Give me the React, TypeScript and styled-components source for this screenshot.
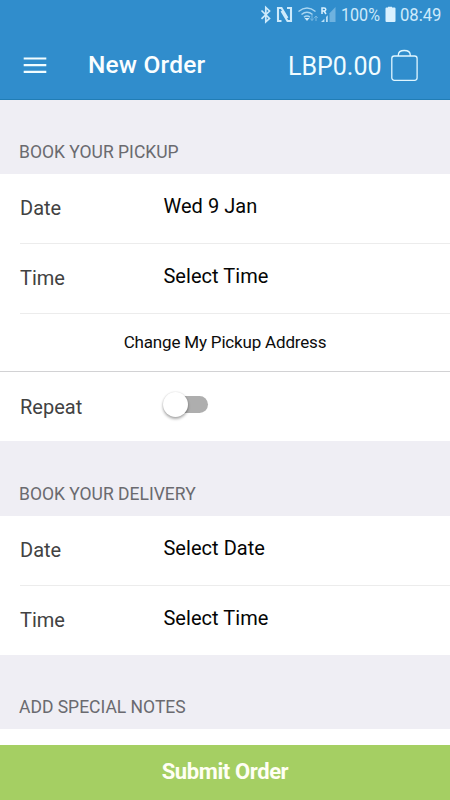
import React from "react";
import styled, { createGlobalStyle } from "styled-components";

const GlobalStyle = createGlobalStyle`
  * { box-sizing: border-box; }
  body { margin: 0; background: #efeef4; font-family: Roboto, "Liberation Sans", sans-serif; }
`;

const Screen = styled.div`
  display: flex;
  flex-direction: column;
  width: 100%;
  height: 800px;
  overflow: hidden;
  background: #efeef4;
`;

const Header = styled.header`
  flex: none;
  height: 100px;
  background: #308dcc;
  color: #fff;
  border-bottom: 1px solid #217db5;
`;

const StatusBar = styled.div`
  display: flex;
  justify-content: flex-end;
  height: 32px;
  padding-right: 9px;
  color: #cdeafb;
`;

const StatusText = styled.span<{ $width: number; $scale: number }>`
  width: ${(p) => p.$width}px;
  font-size: 18.5px;
  line-height: 31px;
  white-space: nowrap;
  transform: scaleX(${(p) => p.$scale});
  transform-origin: left center;
`;

const StatusIcons = styled.svg`
  display: block;
  width: 83px;
  height: 32px;
`;

const Battery = styled.svg`
  display: block;
  width: 15px;
  height: 32px;
`;

const TitleBar = styled.div`
  display: flex;
  align-items: flex-start;
  height: 67px;
  padding: 0 32px 0 23px;
`;

const MenuButton = styled.button`
  width: 65px;
  height: 67px;
  padding: 0;
  border: 0;
  background: none;
  color: inherit;
  svg { display: block; }
`;

const Title = styled.h1`
  flex: 1;
  margin: 0;
  font-size: 24.5px;
  font-weight: 500;
  line-height: 66px;
  letter-spacing: 0.18px;
  color: #fafeff;
`;

const Amount = styled.span`
  width: 103px;
  font-size: 25px;
  line-height: 69px;
  white-space: nowrap;
  color: #f0fcff;
`;

const Bag = styled.svg`
  display: block;
  width: 27px;
  height: 67px;
`;

const Content = styled.main`
  flex: 1;
  min-height: 0;
  overflow: hidden;
`;

const SectionTitle = styled.h2<{ $height?: number }>`
  display: flex;
  align-items: flex-end;
  height: ${(p) => p.$height ?? 74}px;
  margin: 0;
  padding: 0 19px 12px;
  font-size: 17.5px;
  font-weight: 400;
  line-height: 20px;
  color: #6a6a6f;
`;

const List = styled.div`
  background: #fff;
`;

const Row = styled.div<{ $divider?: boolean; $height?: number }>`
  display: grid;
  grid-template-columns: 143.4px 1fr;
  height: ${(p) => p.$height ?? 70}px;
  margin-left: 20px;
  border-bottom: ${(p) => (p.$divider ? "1px solid #ececec" : "0")};
`;

const Label = styled.span<{ $top?: number }>`
  padding-top: ${(p) => p.$top ?? 22}px;
  font-size: 20px;
  line-height: 24px;
  color: #424242;
`;

const Value = styled.span`
  padding-top: 20px;
  font-size: 20px;
  line-height: 24px;
  letter-spacing: 0.05px;
  color: #050505;
`;

const AddressButton = styled.button`
  display: block;
  width: 100%;
  height: 58px;
  padding: 0 0 1px;
  border: 0;
  border-bottom: 1px solid #d2d2d4;
  background: #fff;
  font: 400 17px/22px Roboto, sans-serif;
  letter-spacing: -0.18px;
  color: #0c0c0c;
`;

const Track = styled.span`
  display: block;
  width: 42px;
  height: 17px;
  margin: 24px 0 0 3px;
  border-radius: 9px;
  background: #aeaeae;
`;

const Thumb = styled.span`
  display: block;
  width: 25px;
  height: 25px;
  border-radius: 50%;
  background: #fff;
  box-shadow: 0 2px 3px rgba(0, 0, 0, 0.32), 0 0 2px rgba(0, 0, 0, 0.15);
  transform: translate(-3px, -4px);
`;

const NotesField = styled.div`
  height: 16px;
  background: #fff;
`;

const SubmitButton = styled.button`
  flex: none;
  height: 55px;
  padding: 0 0 2px;
  border: 0;
  background: #a5cf63;
  font: 700 22px/26px Roboto, sans-serif;
  letter-spacing: -0.4px;
  color: #fffff4;
`;

function StatusGlyphs() {
  return (
    <StatusIcons viewBox="258 0 83 32" fill="none">
      <path d="M261.5 10.5 269.5 18.5 265.8 21.8V7.5L269.5 11 261.5 18.8" stroke="#cdeafb" strokeWidth="1.7" />
      <path d="M281.500 21H278V8h3.500l6 10M287 8h4v13h-3.500l-6-10" stroke="#cdeafb" strokeWidth="2.1" />
      <path d="M298.5 11.5q8.5-7 17 0M301.5 14.5q5.5-4.5 11 0M304 17.2q3-2.4 6 0" stroke="#a9d6f2" strokeWidth="1.5" />
      <path d="m304.5 18 2.5 3 2.5-3z" fill="#cdeafb" />
      <path d="M312 15v5.5m-1.7-2 1.7 2 1.7-2M316 21v-5m-1.7 2 1.7-2 1.7 2" stroke="#79b9e3" />
      <path d="M322 14V8h2q1.800 0 1.800 1.500T324 11h-2m2 0 2 3" stroke="#d9f1ff" strokeWidth="1.5" />
      <path d="m321 22 3.4-3.2V22zM326 22v-5l1.8-1.8V22z" fill="#b9dff6" />
      <path d="m329.5 22V13.2L335.5 7v15z" fill="#6eb2df" />
    </StatusIcons>
  );
}

export default function App() {
  return (
    <>
      <GlobalStyle />
      <Screen>
        <Header>
          <StatusBar>
            <StatusGlyphs />
            <StatusText $width={44} $scale={0.87}>100%</StatusText>
            <Battery viewBox="0 0 15 32">
              <path d="M3 7.5V6.8h4v.7h2.5q1 0 1 1V21q0 1-1 1h-8q-1 0-1-1V8.500q0-1 1-1z" fill="#d9f1ff" />
            </Battery>
            <StatusText $width={41} $scale={0.9}>08:49</StatusText>
          </StatusBar>
          <TitleBar>
            <MenuButton aria-label="Menu">
              <svg width="24" height="67" viewBox="0 0 24 67">
                <path d="M.7 26.500h22.600M.7 33.200h22.600M.7 39.900h22.600" stroke="#f2fdff" strokeWidth="2.200" />
              </svg>
            </MenuButton>
            <Title>New Order</Title>
            <Amount>LBP0.00</Amount>
            <Bag viewBox="0 0 27 67" fill="none" stroke="#dff6ff" strokeWidth="1.3">
              <rect x=".8" y="24" width="25.300" height="24.300" rx="2.500" />
              <path d="M7.300 24v-.7q0-4.800 6-4.800t6 4.800v.7" />
            </Bag>
          </TitleBar>
        </Header>
        <Content>
          <SectionTitle>BOOK YOUR PICKUP</SectionTitle>
          <List>
            <Row $divider><Label>Date</Label><Value>Wed 9 Jan</Value></Row>
            <Row $divider><Label>Time</Label><Value>Select Time</Value></Row>
            <AddressButton>Change My Pickup Address</AddressButton>
            <Row $height={69}>
              <Label $top={23}>Repeat</Label>
              <Track role="switch" aria-checked="false"><Thumb /></Track>
            </Row>
          </List>
          <SectionTitle $height={75}>BOOK YOUR DELIVERY</SectionTitle>
          <List>
            <Row $divider><Label>Date</Label><Value>Select Date</Value></Row>
            <Row $height={69}><Label>Time</Label><Value>Select Time</Value></Row>
          </List>
          <SectionTitle>ADD SPECIAL NOTES</SectionTitle>
          <NotesField />
        </Content>
        <SubmitButton>Submit Order</SubmitButton>
      </Screen>
    </>
  );
}
